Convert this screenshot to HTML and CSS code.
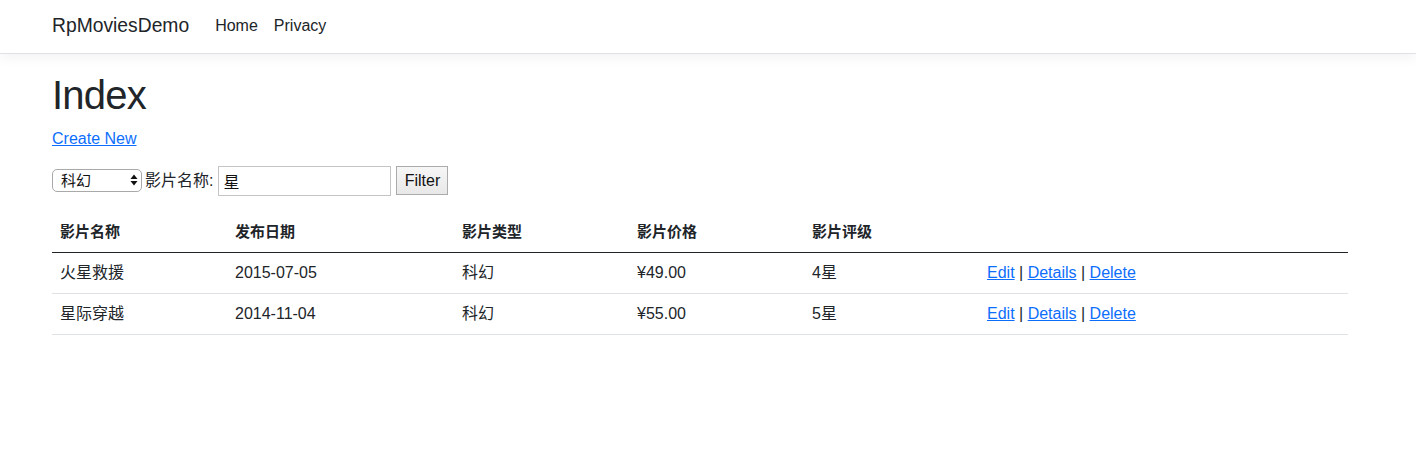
FILE: index.html
```html
<!DOCTYPE html>
<html lang="zh">
<head>
<meta charset="utf-8">
<title>Index - RpMoviesDemo</title>
<link rel="stylesheet" href="styles.css">
</head>
<body>
<header class="navbar">
  <div class="container nav-inner">
    <a class="brand" href="#">RpMoviesDemo</a>
    <nav class="nav-links">
      <a href="#">Home</a>
      <a href="#">Privacy</a>
    </nav>
  </div>
</header>
<main class="container">
  <h1 class="title">Index</h1>
  <p class="create"><a href="#">Create New</a></p>
  <form class="filter">
    <span class="select-wrap">
      <select class="genre">
        <option>科幻</option>
      </select>
      <svg class="select-arrows" width="8" height="12" viewBox="0 0 8 12"><path d="M4 0.5 L7.5 5 H0.5 Z M4 11.5 L7.5 7 H0.5 Z" fill="#111"/></svg>
    </span>
    <label class="label">影片名称:</label>
    <input class="search" type="text" value="星">
    <button class="btn" type="button">Filter</button>
  </form>
  <table class="table">
    <thead>
      <tr>
        <th class="c1">影片名称</th>
        <th class="c2">发布日期</th>
        <th class="c3">影片类型</th>
        <th class="c4">影片价格</th>
        <th class="c5">影片评级</th>
        <th></th>
      </tr>
    </thead>
    <tbody>
      <tr>
        <td>火星救援</td>
        <td>2015-07-05</td>
        <td>科幻</td>
        <td>¥49.00</td>
        <td>4星</td>
        <td><a href="#">Edit</a> | <a href="#">Details</a> | <a href="#">Delete</a></td>
      </tr>
      <tr>
        <td>星际穿越</td>
        <td>2014-11-04</td>
        <td>科幻</td>
        <td>¥55.00</td>
        <td>5星</td>
        <td><a href="#">Edit</a> | <a href="#">Details</a> | <a href="#">Delete</a></td>
      </tr>
    </tbody>
  </table>
</main>
</body>
</html>
```
FILE: styles.css
```css
* { box-sizing: border-box; }
html, body {
  margin: 0;
  padding: 0;
  background: #fff;
  color: #212529;
  font-family: "Liberation Sans", "Noto Sans CJK SC", sans-serif;
  font-size: 16px;
  line-height: 1.5;
}
a { color: #0d6efd; }
.container {
  width: 1296px;
  margin-left: 52px;
}
.navbar {
  height: 54px;
  border-bottom: 1px solid #dee2e6;
  box-shadow: 0 4px 12px rgba(0, 0, 0, 0.05);
  background: #fff;
}
.nav-inner {
  height: 52px;
  display: flex;
  align-items: center;
}
.brand {
  color: #212529;
  text-decoration: none;
  font-size: 19.3px;
  margin-right: 26px;
}
.nav-links { display: flex; gap: 16px; }
.nav-links a {
  color: #212529;
  text-decoration: none;
  font-size: 16px;
}
.title {
  margin: 17px 0 8px;
  font-size: 40px;
  font-weight: 500;
  line-height: 48px;
  letter-spacing: -0.8px;
}
.create { margin: 0 0 14px; }
.filter {
  display: flex;
  align-items: center;
  height: 31px;
  margin-bottom: 16px;
}
.select-wrap {
  position: relative;
  display: inline-block;
  width: 90px;
  height: 23px;
}
.genre {
  appearance: none;
  -webkit-appearance: none;
  width: 90px;
  height: 23px;
  border: 1px solid #a9a9a9;
  border-radius: 5px;
  background: #fff;
  padding: 0 0 0 8px;
  font-family: "Liberation Sans", "Noto Sans CJK SC", sans-serif;
  font-size: 15px;
  color: #111;
}
.select-arrows {
  position: absolute;
  right: 4px;
  top: 5px;
  pointer-events: none;
}
.label { margin: 0 5px 0 3px; }
.search {
  width: 173px;
  height: 30px;
  border: 1px solid #c4c4c4;
  padding: 0 4px;
  font-family: "Liberation Sans", "Noto Sans CJK SC", sans-serif;
  font-size: 16px;
  color: #111;
}
.btn {
  margin-left: 5px;
  height: 29px;
  width: 52px;
  border: 1px solid #ababab;
  background: linear-gradient(#f6f6f6, #e8e8e8);
  font-family: "Liberation Sans", sans-serif;
  font-size: 16px;
  color: #111;
  padding: 0;
}
.table {
  width: 1296px;
  border-collapse: collapse;
}
.table th, .table td {
  text-align: left;
  padding: 8px;
  height: 41px;
  border-bottom: 1px solid #dee2e6;
  vertical-align: middle;
}
.table th { font-weight: 700; border-bottom: 1px solid #212529; height: 40px; font-size: 15px; }
.table tbody tr:first-child td { border-top: 1px solid #212529; }
.c1 { width: 175px; }
.c2 { width: 227px; }
.c3 { width: 175px; }
.c4 { width: 175px; }
.c5 { width: 175px; }
```
